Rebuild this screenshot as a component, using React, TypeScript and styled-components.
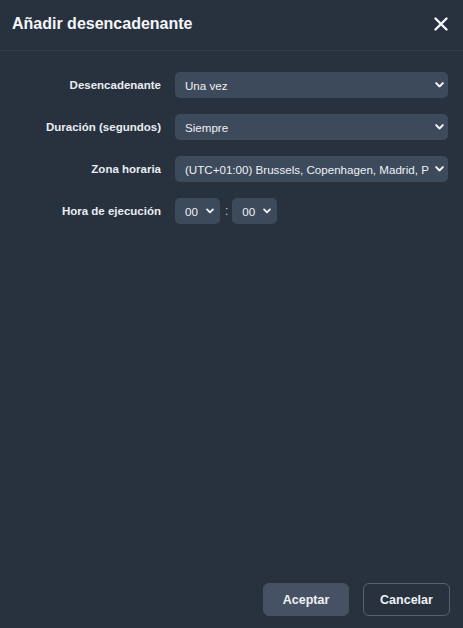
import React from 'react';
import styled, { createGlobalStyle } from 'styled-components';

const GlobalStyle = createGlobalStyle`
  html, body {
    margin: 0;
    padding: 0;
    background: #28323f;
  }
  * { box-sizing: border-box; }
`;

const Chevron = ({ size }: { size: number }) => (
  <svg width={size} height={size * 0.7} viewBox="0 0 10 7" fill="none">
    <path d="M1.3 1.4 L5 5.1 L8.7 1.4" stroke="#f2f4f7" strokeWidth="2.3" strokeLinecap="round" strokeLinejoin="round" />
  </svg>
);

const CloseIcon = () => (
  <svg width="14" height="14" viewBox="0 0 14 14" fill="none">
    <path d="M1.5 1.5 L12.5 12.5 M12.5 1.5 L1.5 12.5" stroke="#f4f6f9" strokeWidth="2.4" strokeLinecap="round" />
  </svg>
);

function Select({ value, options, width }: { value: string; options: string[]; width?: number }) {
  const compact = !!width;
  return (
    <SelectWrap $width={width}>
      <NativeSelect defaultValue={value}>
        {options.map((o) => (
          <option key={o}>{o}</option>
        ))}
      </NativeSelect>
      <ChevronBox $compact={compact}>
        <Chevron size={compact ? 8 : 9} />
      </ChevronBox>
    </SelectWrap>
  );
}

export default function App() {
  return (
    <>
      <GlobalStyle />
      <Dialog>
        <Header>
          <Title>Añadir desencadenante</Title>
          <CloseButton aria-label="Cerrar">
            <CloseIcon />
          </CloseButton>
        </Header>
        <Body>
          <Form>
            <Label>Desencadenante</Label>
            <Select value="Una vez" options={['Una vez', 'Diario', 'Semanal']} />
            <Label>Duración (segundos)</Label>
            <Select value="Siempre" options={['Siempre', '60', '300']} />
            <Label>Zona horaria</Label>
            <Select
              value="(UTC+01:00) Brussels, Copenhagen, Madrid, Paris"
              options={['(UTC+01:00) Brussels, Copenhagen, Madrid, Paris']}
            />
            <Label>Hora de ejecución</Label>
            <TimeRow>
              <Select value="00" options={['00', '01', '02']} width={45} />
              <Colon>:</Colon>
              <Select value="00" options={['00', '15', '30']} width={45} />
            </TimeRow>
          </Form>
        </Body>
        <Footer>
          <PrimaryButton>Aceptar</PrimaryButton>
          <SecondaryButton>Cancelar</SecondaryButton>
        </Footer>
      </Dialog>
    </>
  );
}

const Dialog = styled.div`
  display: flex;
  flex-direction: column;
  width: 463px;
  height: 628px;
  background: #28323f;
  font-family: 'Liberation Sans', Arial, sans-serif;
  color: #eef1f5;
`;

const Header = styled.div`
  display: flex;
  align-items: center;
  justify-content: space-between;
  height: 51px;
  padding: 0 15px 2px 12px;
  border-bottom: 1px solid #323d4b;
`;

const Title = styled.h2`
  margin: 0;
  font-size: 16px;
  font-weight: 700;
  color: #f4f6f9;
`;

const CloseButton = styled.button`
  display: flex;
  align-items: center;
  justify-content: center;
  padding: 0;
  background: none;
  border: none;
  cursor: pointer;
`;

const Body = styled.div`
  flex: 1;
  padding: 21px 15px 0 12px;
`;

const Form = styled.div`
  display: grid;
  grid-template-columns: 149px 1fr;
  column-gap: 14px;
  row-gap: 16px;
  align-items: center;
`;

const Label = styled.label`
  text-align: right;
  font-size: 11.5px;
  font-weight: 700;
  color: #e9ecf0;
`;

const SelectWrap = styled.div<{ $width?: number }>`
  position: relative;
  width: ${(p) => (p.$width ? `${p.$width}px` : '100%')};
  height: 26px;
`;

const NativeSelect = styled.select`
  appearance: none;
  -webkit-appearance: none;
  width: 100%;
  height: 100%;
  padding: 0 19px 0 10px;
  background: #3d4a5c;
  border: none;
  border-radius: 5px;
  color: #eef1f5;
  font-family: 'Liberation Sans', Arial, sans-serif;
  font-size: 11.6px;
  white-space: nowrap;
  overflow: hidden;
  text-overflow: clip;
  outline: none;
`;

const ChevronBox = styled.span<{ $compact: boolean }>`
  position: absolute;
  right: ${(p) => (p.$compact ? '6px' : '4px')};
  top: 50%;
  transform: translateY(-50%);
  display: flex;
  pointer-events: none;
`;

const TimeRow = styled.div`
  display: flex;
  align-items: center;
  gap: 4px;
`;

const Colon = styled.span`
  font-size: 12px;
  color: #c9ced6;
  padding: 0 0 1px 1px;
`;

const Footer = styled.div`
  display: flex;
  justify-content: flex-end;
  gap: 14px;
  padding: 0 13px 12px;
`;

const BaseButton = styled.button`
  height: 33px;
  border-radius: 6px;
  font-family: 'Liberation Sans', Arial, sans-serif;
  font-size: 12.5px;
  font-weight: 700;
  color: #eef1f5;
  cursor: pointer;
`;

const PrimaryButton = styled(BaseButton)`
  width: 86px;
  background: #465263;
  border: 1px solid #465263;
`;

const SecondaryButton = styled(BaseButton)`
  width: 87px;
  background: #28323f;
  border: 1px solid #566272;
`;
